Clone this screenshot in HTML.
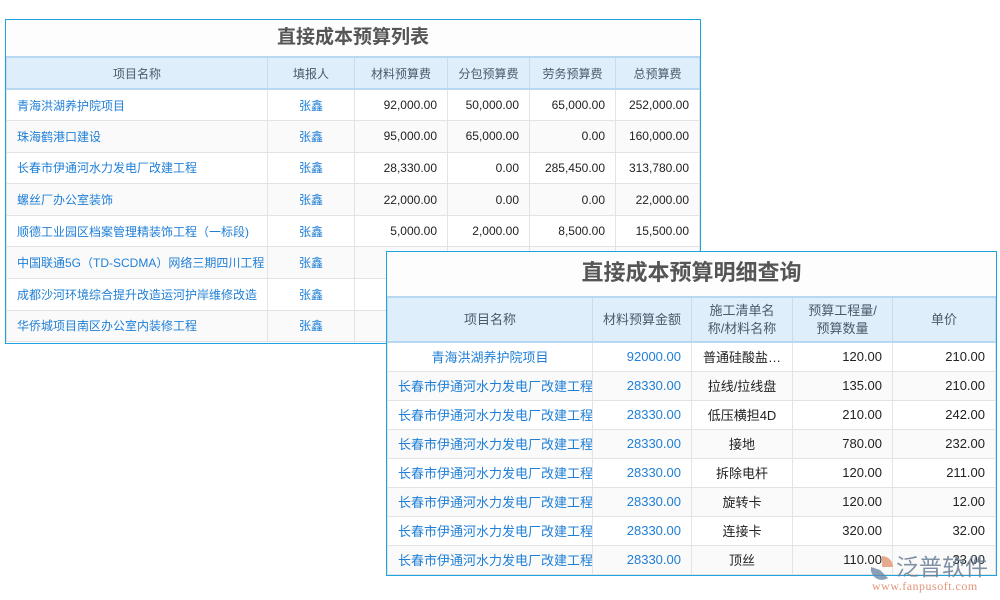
<!DOCTYPE html>
<html><head><meta charset="utf-8"><style>
*{margin:0;padding:0;box-sizing:border-box}
body{width:1000px;height:600px;background:#fff;position:relative;overflow:hidden;font-family:"Liberation Sans","Noto Sans CJK SC",sans-serif}
.box{position:absolute;border:1px solid #1ca4e0;background:#fff;overflow:hidden}
.ttl{text-align:center;font-weight:bold;color:#555;background:#fdfdfd;border-bottom:2px solid #b8d8f2}
table{border-collapse:collapse;width:100%;table-layout:fixed}
td,th{border:1px solid #e3e3e3;white-space:nowrap;overflow:hidden;border-top:none}
th{background:#dfeefb;font-weight:normal;color:#4a5a6a;border-color:#c8dcee}
thead tr{border-bottom:2px solid #b8d8f2}
.b{color:#1f7fd6}
.r{text-align:right}.c{text-align:center}
tbody tr:nth-child(even) td{background:#fafafa}
#t1 td,#t1 th{font-size:12px;height:31.6px;padding:0 10px}
#t1 th{height:31px}
#t2 td,#t2 th{font-size:13px;height:29px;padding:0 10px}
#t2 th{height:44px;line-height:18px}
td{color:#222}
</style></head><body>
<div class="box" id="t1" style="left:5px;top:19px;width:696px;height:325px">
<div class="ttl" style="height:38px;line-height:35px;font-size:19px">直接成本预算列表</div>
<table>
<colgroup><col style="width:261px"><col style="width:87px"><col style="width:93px"><col style="width:82px"><col style="width:86px"><col></colgroup>
<thead><tr><th>项目名称</th><th>填报人</th><th>材料预算费</th><th>分包预算费</th><th>劳务预算费</th><th>总预算费</th></tr></thead>
<tbody>
<tr><td class="b">青海洪湖养护院项目</td><td class="b c">张鑫</td><td class="r">92,000.00</td><td class="r">50,000.00</td><td class="r">65,000.00</td><td class="r">252,000.00</td></tr>
<tr><td class="b">珠海鹤港口建设</td><td class="b c">张鑫</td><td class="r">95,000.00</td><td class="r">65,000.00</td><td class="r">0.00</td><td class="r">160,000.00</td></tr>
<tr><td class="b">长春市伊通河水力发电厂改建工程</td><td class="b c">张鑫</td><td class="r">28,330.00</td><td class="r">0.00</td><td class="r">285,450.00</td><td class="r">313,780.00</td></tr>
<tr><td class="b">螺丝厂办公室装饰</td><td class="b c">张鑫</td><td class="r">22,000.00</td><td class="r">0.00</td><td class="r">0.00</td><td class="r">22,000.00</td></tr>
<tr><td class="b">顺德工业园区档案管理精装饰工程（一标段)</td><td class="b c">张鑫</td><td class="r">5,000.00</td><td class="r">2,000.00</td><td class="r">8,500.00</td><td class="r">15,500.00</td></tr>
<tr><td class="b">中国联通5G（TD-SCDMA）网络三期四川工程</td><td class="b c">张鑫</td><td></td><td></td><td></td><td></td></tr>
<tr><td class="b">成都沙河环境综合提升改造运河护岸维修改造</td><td class="b c">张鑫</td><td></td><td></td><td></td><td></td></tr>
<tr><td class="b">华侨城项目南区办公室内装修工程</td><td class="b c">张鑫</td><td></td><td></td><td></td><td></td></tr>
</tbody></table></div>

<div class="box" id="t2" style="left:386px;top:251px;width:611px;height:325px">
<div class="ttl" style="height:46px;line-height:42px;font-size:22px">直接成本预算明细查询</div>
<table>
<colgroup><col style="width:205px"><col style="width:99px"><col style="width:101px"><col style="width:100px"><col></colgroup>
<thead><tr><th>项目名称</th><th>材料预算金额</th><th>施工清单名<br>称/材料名称</th><th>预算工程量/<br>预算数量</th><th>单价</th></tr></thead>
<tbody>
<tr><td class="b c">青海洪湖养护院项目</td><td class="b r">92000.00</td><td class="c">普通硅酸盐…</td><td class="r">120.00</td><td class="r">210.00</td></tr>
<tr><td class="b">长春市伊通河水力发电厂改建工程</td><td class="b r">28330.00</td><td class="c">拉线/拉线盘</td><td class="r">135.00</td><td class="r">210.00</td></tr>
<tr><td class="b">长春市伊通河水力发电厂改建工程</td><td class="b r">28330.00</td><td class="c">低压横担4D</td><td class="r">210.00</td><td class="r">242.00</td></tr>
<tr><td class="b">长春市伊通河水力发电厂改建工程</td><td class="b r">28330.00</td><td class="c">接地</td><td class="r">780.00</td><td class="r">232.00</td></tr>
<tr><td class="b">长春市伊通河水力发电厂改建工程</td><td class="b r">28330.00</td><td class="c">拆除电杆</td><td class="r">120.00</td><td class="r">211.00</td></tr>
<tr><td class="b">长春市伊通河水力发电厂改建工程</td><td class="b r">28330.00</td><td class="c">旋转卡</td><td class="r">120.00</td><td class="r">12.00</td></tr>
<tr><td class="b">长春市伊通河水力发电厂改建工程</td><td class="b r">28330.00</td><td class="c">连接卡</td><td class="r">320.00</td><td class="r">32.00</td></tr>
<tr><td class="b">长春市伊通河水力发电厂改建工程</td><td class="b r">28330.00</td><td class="c">顶丝</td><td class="r">110.00</td><td class="r">33.00</td></tr>
</tbody></table></div>

<svg style="position:absolute;left:868px;top:554px" width="28" height="26" viewBox="0 0 28 26">
<path d="M14 2 A11 11 0 0 1 25 13 L14 13 Z" fill="#e39a78" opacity=".85"/>
<path d="M3 13 A11 11 0 0 0 20 24 L12 16 Z" fill="#6a8aa8" opacity=".8"/>
</svg>
<div style="position:absolute;left:896px;top:552px;font-size:23px;color:#6a7e94;opacity:.85;white-space:nowrap;font-family:'Noto Sans CJK SC',sans-serif;line-height:26px">泛普软件</div>
<div style="position:absolute;left:872px;top:579px;font-size:12px;color:#e0957a;white-space:nowrap;font-family:'Liberation Serif',serif;letter-spacing:.5px">www.fanpusoft.com</div>
</body></html>
